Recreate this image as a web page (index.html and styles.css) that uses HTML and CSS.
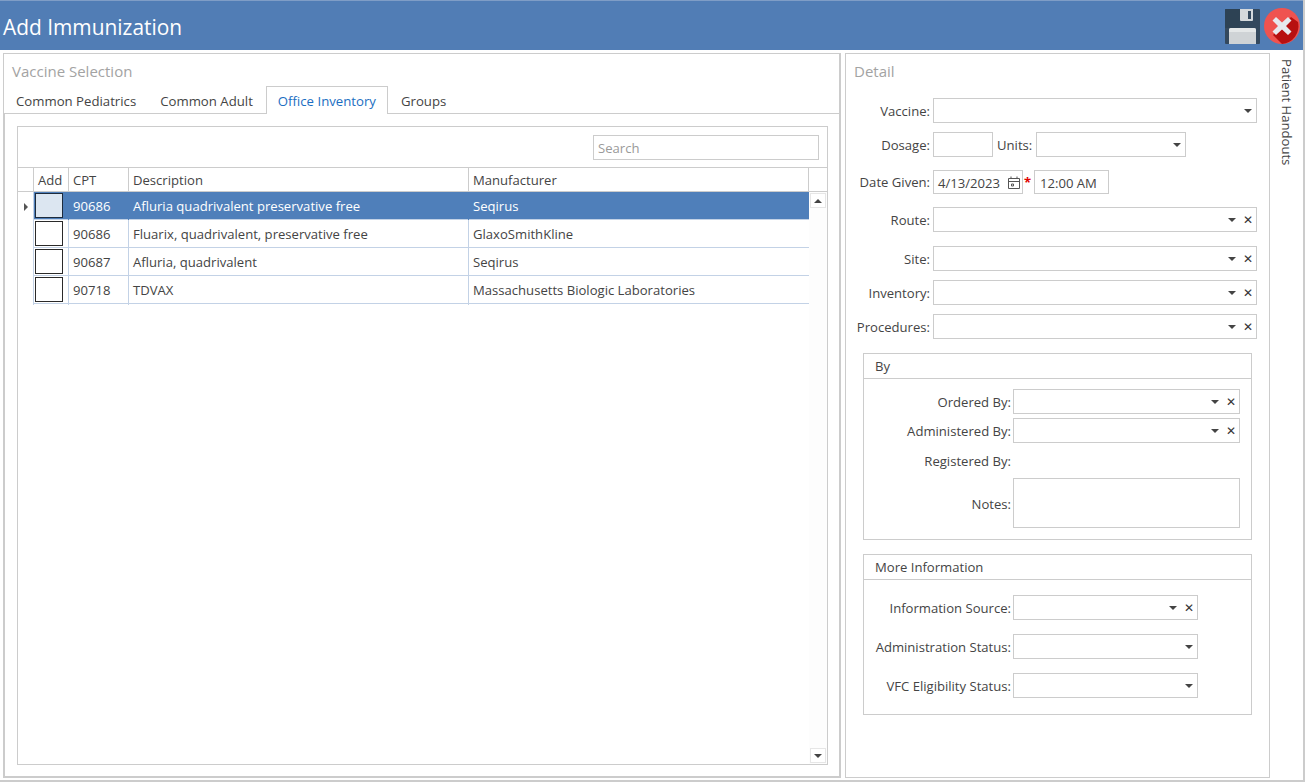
FILE: index.html
```html
<!DOCTYPE html>
<html lang="en">
<head>
<meta charset="utf-8">
<title>Add Immunization</title>
<link rel="stylesheet" href="styles.css">
</head>
<body>
<div class="window">
  <header class="titlebar">
    <h1 class="title">Add Immunization</h1>
    <div class="title-actions">
      <svg class="save-icon" width="35" height="35" viewBox="0 0 35 35">
        <path d="M1 0H34a1 1 0 0 1 1 1V34a1 1 0 0 1-1 1H1a1 1 0 0 1-1-1V1a1 1 0 0 1 1-1z" fill="#34495e"/>
        <path d="M0 1a1 1 0 0 1 1-1H15V19H0z" fill="#2d4254"/>
        <path d="M15 0H28V11a1 1 0 0 1-1 1H16a1 1 0 0 1-1-1z" fill="#d5d9dc"/>
        <rect x="23" y="2" width="3" height="8" fill="#34495e"/>
        <path d="M4 21a2 2 0 0 1 2-2H29a2 2 0 0 1 2 2V35H4z" fill="#cfd3d6"/>
        <path d="M4 21a2 2 0 0 1 2-2H29a2 2 0 0 1 2 2v2H4z" fill="#e4e7e8"/>
      </svg>
      <svg class="close-icon" width="36" height="36" viewBox="0 0 36 36">
        <circle cx="18" cy="18" r="18" fill="#ef5350"/>
        <path d="M27 9 34 14A18 18 0 0 1 18 36L9 27z" fill="#b71010"/>
        <path d="M12 9 18 14.500 24 9 27.500 12.500 22 18 27.500 23.500 24 27 18 21.500 12 27 8.500 23.500 14 18 8.500 12.500z" fill="#e6e9ee"/>
      </svg>
    </div>
  </header>
  <div class="body">
    <section class="left-panel">
      <h2 class="panel-title">Vaccine Selection</h2>
      <nav class="tabs">
        <span class="tab">Common Pediatrics</span>
        <span class="tab">Common Adult</span>
        <span class="tab tab-active">Office Inventory</span>
        <span class="tab">Groups</span>
      </nav>
      <div class="tab-content">
        <div class="grid-box">
          <div class="grid-toolbar"><div class="search">Search</div></div>
          <div class="grid-head">
            <div class="hc hc-ind"></div>
            <div class="hc">Add</div>
            <div class="hc">CPT</div>
            <div class="hc">Description</div>
            <div class="hc">Manufacturer</div>
            <div class="hc hc-end"></div>
          </div>
          <div class="grid-main">
            <div class="rows">
              <div class="row row-selected">
                <div class="cell-ind"><span class="arrow-right"></span></div>
                <div class="cell cell-check"><span class="check"></span></div>
                <div class="cell">90686</div>
                <div class="cell">Afluria quadrivalent preservative free</div>
                <div class="cell">Seqirus</div>
              </div>
              <div class="row">
                <div class="cell-ind"></div>
                <div class="cell cell-check"><span class="check"></span></div>
                <div class="cell">90686</div>
                <div class="cell">Fluarix, quadrivalent, preservative free</div>
                <div class="cell">GlaxoSmithKline</div>
              </div>
              <div class="row">
                <div class="cell-ind"></div>
                <div class="cell cell-check"><span class="check"></span></div>
                <div class="cell">90687</div>
                <div class="cell">Afluria, quadrivalent</div>
                <div class="cell">Seqirus</div>
              </div>
              <div class="row">
                <div class="cell-ind"></div>
                <div class="cell cell-check"><span class="check"></span></div>
                <div class="cell">90718</div>
                <div class="cell">TDVAX</div>
                <div class="cell">Massachusetts Biologic Laboratories</div>
              </div>
            </div>
            <div class="scrollbar">
              <div class="scroll-btn"><span class="tri-up"></span></div>
              <div class="scroll-btn"><span class="tri-down"></span></div>
            </div>
          </div>
        </div>
      </div>
    </section>
    <section class="right-panel">
      <h2 class="panel-title panel-title-detail">Detail</h2>
      <div class="form">
        <div class="frow frow-vaccine"><label class="lbl">Vaccine:</label><div class="field field-full"><span class="tri-down"></span></div></div>
        <div class="frow frow-dosage">
          <label class="lbl">Dosage:</label>
          <div class="field field-dose"></div>
          <label class="lbl-units">Units:</label>
          <div class="field field-units"><span class="tri-down"></span></div>
        </div>
        <div class="frow frow-date">
          <label class="lbl">Date Given:</label>
          <div class="field field-date">4/13/2023<svg class="cal" width="12" height="13" viewBox="0 0 12 13"><path d="M.5 2.500h11v10H.5zM.5 5.500h11M3 .5v2M9 .5v2M3.500 8h2v2h-2z" fill="none" stroke="#555"/></svg></div>
          <span class="req">*</span>
          <div class="field field-time">12:00 AM</div>
        </div>
        <div class="frow frow-route"><label class="lbl">Route:</label><div class="field field-full"><span class="tri-down"></span><span class="x">✕</span></div></div>
        <div class="frow frow-site"><label class="lbl">Site:</label><div class="field field-full"><span class="tri-down"></span><span class="x">✕</span></div></div>
        <div class="frow frow-inv"><label class="lbl">Inventory:</label><div class="field field-full"><span class="tri-down"></span><span class="x">✕</span></div></div>
        <div class="frow frow-inv"><label class="lbl">Procedures:</label><div class="field field-full"><span class="tri-down"></span><span class="x">✕</span></div></div>

        <div class="group group-by">
          <div class="group-head">By</div>
          <div class="group-body">
            <div class="grow"><label class="glbl">Ordered By:</label><div class="field field-g"><span class="tri-down"></span><span class="x">✕</span></div></div>
            <div class="grow grow-admin"><label class="glbl">Administered By:</label><div class="field field-g"><span class="tri-down"></span><span class="x">✕</span></div></div>
            <div class="grow grow-reg"><label class="glbl">Registered By:</label></div>
            <div class="grow grow-notes"><label class="glbl glbl-notes">Notes:</label><div class="field field-notes"></div></div>
          </div>
        </div>

        <div class="group group-more">
          <div class="group-head">More Information</div>
          <div class="group-body group-body-more">
            <div class="grow"><label class="glbl">Information Source:</label><div class="field field-src"><span class="tri-down"></span><span class="x">✕</span></div></div>
            <div class="grow grow-more"><label class="glbl">Administration Status:</label><div class="field field-src"><span class="tri-down"></span></div></div>
            <div class="grow grow-more"><label class="glbl">VFC Eligibility Status:</label><div class="field field-src"><span class="tri-down"></span></div></div>
          </div>
        </div>
      </div>
    </section>
    <aside class="side-tab"><span class="side-text">Patient Handouts</span></aside>
  </div>
</div>
</body>
</html>
```
FILE: styles.css
```css
* { box-sizing: border-box; }
html, body { margin: 0; padding: 0; height: 100%; }
body {
  width: 1305px;
  height: 782px;
  overflow: hidden;
  background: #fff;
  font-family: "Open Sans", "Liberation Sans", sans-serif;
  font-size: 13.100px;
  color: #444;
}
.window {
  height: 782px;
  display: flex;
  flex-direction: column;
  border-right: 2px solid #ccc;
  border-bottom: 2px solid #ccc;
}
.titlebar {
  height: 50px;
  flex: none;
  background: #517db5;
  border-top: 1px solid #7f9dc6;
  display: flex;
  align-items: center;
  justify-content: space-between;
  padding-left: 3px;
}
.title {
  margin: 0;
  padding-top: 2px;
  font-size: 20.900px;
  font-weight: 400;
  color: #fff;
}
.title-actions {
  display: flex;
  align-items: center;
  gap: 4px;
  padding-right: 3px;
  padding-top: 1px;
}
.body {
  flex: 1;
  display: flex;
  padding: 3px 0 0 3px;
  min-height: 0;
}
.left-panel {
  width: 838px;
  height: 725px;
  border: 1px solid #ccc;
  border-right-width: 2px;
  border-bottom-width: 2px;
  display: flex;
  flex-direction: column;
}
.panel-title {
  margin: 0;
  font-size: 15px;
  font-weight: 400;
  color: #a3a3a3;
  height: 32px;
  padding: 7px 0 0 8px;
  line-height: 20px;
}
.tabs {
  display: flex;
  height: 28px;
  border-bottom: 1px solid #ccc;
  font-size: 13.200px;
}
.tab {
  padding: 0 12px;
  line-height: 30px;
  white-space: nowrap;
}
.tab-active {
  color: #1b6ec2;
  border: 1px solid #ccc;
  border-bottom: 0;
  background: #fff;
  height: 28px;
  margin-left: 1px;
  padding: 0 11px;
  line-height: 28px;
}
.tab-active + .tab { padding-left: 13px; }
.tab-content {
  flex: 1;
  padding: 12px 11px 11px 12px;
  border-left: 1px solid #ccc;
  min-height: 0;
}
.grid-box {
  height: 100%;
  border: 1px solid #ccc;
  display: flex;
  flex-direction: column;
}
.grid-toolbar {
  height: 40px;
  flex: none;
  display: flex;
  justify-content: flex-end;
  align-items: flex-start;
  padding: 8px 8px 0 0;
}
.search {
  width: 226px;
  height: 25px;
  border: 1px solid #ccc;
  color: #9a9a9a;
  padding-left: 4px;
  line-height: 25px;
}
.grid-head {
  display: grid;
  grid-template-columns: 16px 35px 60px 340px 340px 1fr;
  height: 25px;
  border-top: 1px solid #ccc;
  border-bottom: 1px solid #ccc;
  flex: none;
}
.hc {
  padding-left: 4px;
  line-height: 25px;
  border-right: 1px solid #ccc;
}
.hc-ind { padding: 0; }
.hc-end { border-right: 0; }
.grid-main {
  flex: 1;
  display: flex;
  min-height: 0;
}
.rows {
  width: 791px;
  flex: none;
}
.row {
  display: grid;
  grid-template-columns: 16px 35px 60px 340px 340px;
  height: 28px;
  border-bottom: 1px solid #c3d2e6;
}
.cell {
  padding-left: 4px;
  line-height: 29px;
  border-right: 1px solid #c3d2e6;
}
.cell:last-child { border-right: 0; }
.cell-ind {
  display: flex;
  align-items: center;
  justify-content: center;
  padding-left: 1px;
  background: #fff;
  border-right: 1px solid #c3d2e6;
}
.row-selected {
  background: #4f7fba;
  color: #fff;
}
.row-selected .cell { border-right-color: #4f7fba; }
.cell-check {
  padding: 1px 0 0 1px;
  line-height: 0;
}
.check {
  display: block;
  width: 28px;
  height: 25px;
  border: 1px solid #2a2a2a;
  background: #fff;
}
.row-selected .check {
  background: #dce6f1;
  border-color: #1d2b3d;
}
.arrow-right {
  width: 0;
  height: 0;
  border-top: 4px solid transparent;
  border-bottom: 4px solid transparent;
  border-left: 4px solid #555;
}
.scrollbar {
  flex: 1;
  display: flex;
  flex-direction: column;
  justify-content: space-between;
  background: #fdfdfd;
  padding: 1px;
}
.scroll-btn {
  height: 15px;
  border: 1px solid #e6e6e6;
  display: flex;
  align-items: center;
  justify-content: center;
  background: #fff;
}
.tri-up {
  width: 0;
  height: 0;
  border-left: 4px solid transparent;
  border-right: 4px solid transparent;
  border-bottom: 4px solid #444;
}
.tri-down {
  width: 0;
  height: 0;
  border-left: 4px solid transparent;
  border-right: 4px solid transparent;
  border-top: 4px solid #444;
}
.right-panel {
  width: 425px;
  height: 725px;
  margin-left: 4px;
  border: 1px solid #ccc;
  display: flex;
  flex-direction: column;
}
.form {
  padding-right: 12px;
}
.panel-title-detail { height: 44px; }
.frow {
  display: flex;
  align-items: center;
}
.lbl {
  width: 87px;
  text-align: right;
  flex: none;
  padding-right: 3px;
  white-space: nowrap;
}
.field {
  height: 25px;
  border: 1px solid #ccc;
  background: #fff;
  display: flex;
  align-items: center;
  justify-content: flex-end;
  padding-right: 4px;
  flex: none;
}
.field-full { width: 324px; }
.field .x {
  font-size: 12px;
  margin-left: 7px;
  color: #333;
  line-height: 1;
  width: 9px;
  text-align: center;
  font-family: "DejaVu Sans", sans-serif;
}
.frow-dosage { margin-top: 9px; }
.field-dose { width: 60px; }
.lbl-units { width: 35px; margin-left: 4px; margin-right: 4px; white-space: nowrap; }
.field-units { width: 150px; }
.frow-date { margin-top: 13px; }
.field-date {
  width: 90px;
  height: 24px;
  justify-content: flex-start;
  padding: 2px 0 0 4px;
  white-space: nowrap;
}
.cal { margin: -2px 2px 0 auto; flex: none; }
.req {
  color: #e00000;
  width: 11px;
  font-weight: 700;
  font-size: 13px;
  line-height: 14px;
  height: 14px;
  padding-left: 1px;
}
.field-time {
  width: 75px;
  height: 24px;
  justify-content: flex-start;
  padding: 2px 0 0 5px;
}
.frow-route { margin-top: 13px; }
.frow-site { margin-top: 14px; }
.frow-inv { margin-top: 9px; }
.group {
  margin-left: 17px;
  width: 389px;
  border: 1px solid #ccc;
}
.group-by { margin-top: 14px; height: 187px; }
.group-more { margin-top: 14px; height: 161px; }
.group-head {
  height: 25px;
  border-bottom: 1px solid #ccc;
  padding-left: 11px;
  line-height: 24px;
}
.group-body { padding-top: 10px; }
.group-body-more { padding-top: 15px; }
.grow {
  display: flex;
  align-items: center;
}
.glbl {
  width: 149px;
  flex: none;
  text-align: right;
  padding-right: 2px;
  white-space: nowrap;
}
.glbl-notes { padding-top: 2px; }
.field-g { width: 227px; }
.grow-admin { margin-top: 4px; }
.grow-reg { height: 18px; margin-top: 9px; }
.grow-notes { margin-top: 8px; }
.field-notes { width: 227px; height: 50px; }
.field-src { width: 185px; }
.grow-more { margin-top: 14px; }
.side-tab {
  width: 33px;
  display: flex;
  justify-content: center;
  padding-top: 6px;
}
.side-text {
  writing-mode: vertical-rl;
  white-space: nowrap;
  height: 110px;
}
```
